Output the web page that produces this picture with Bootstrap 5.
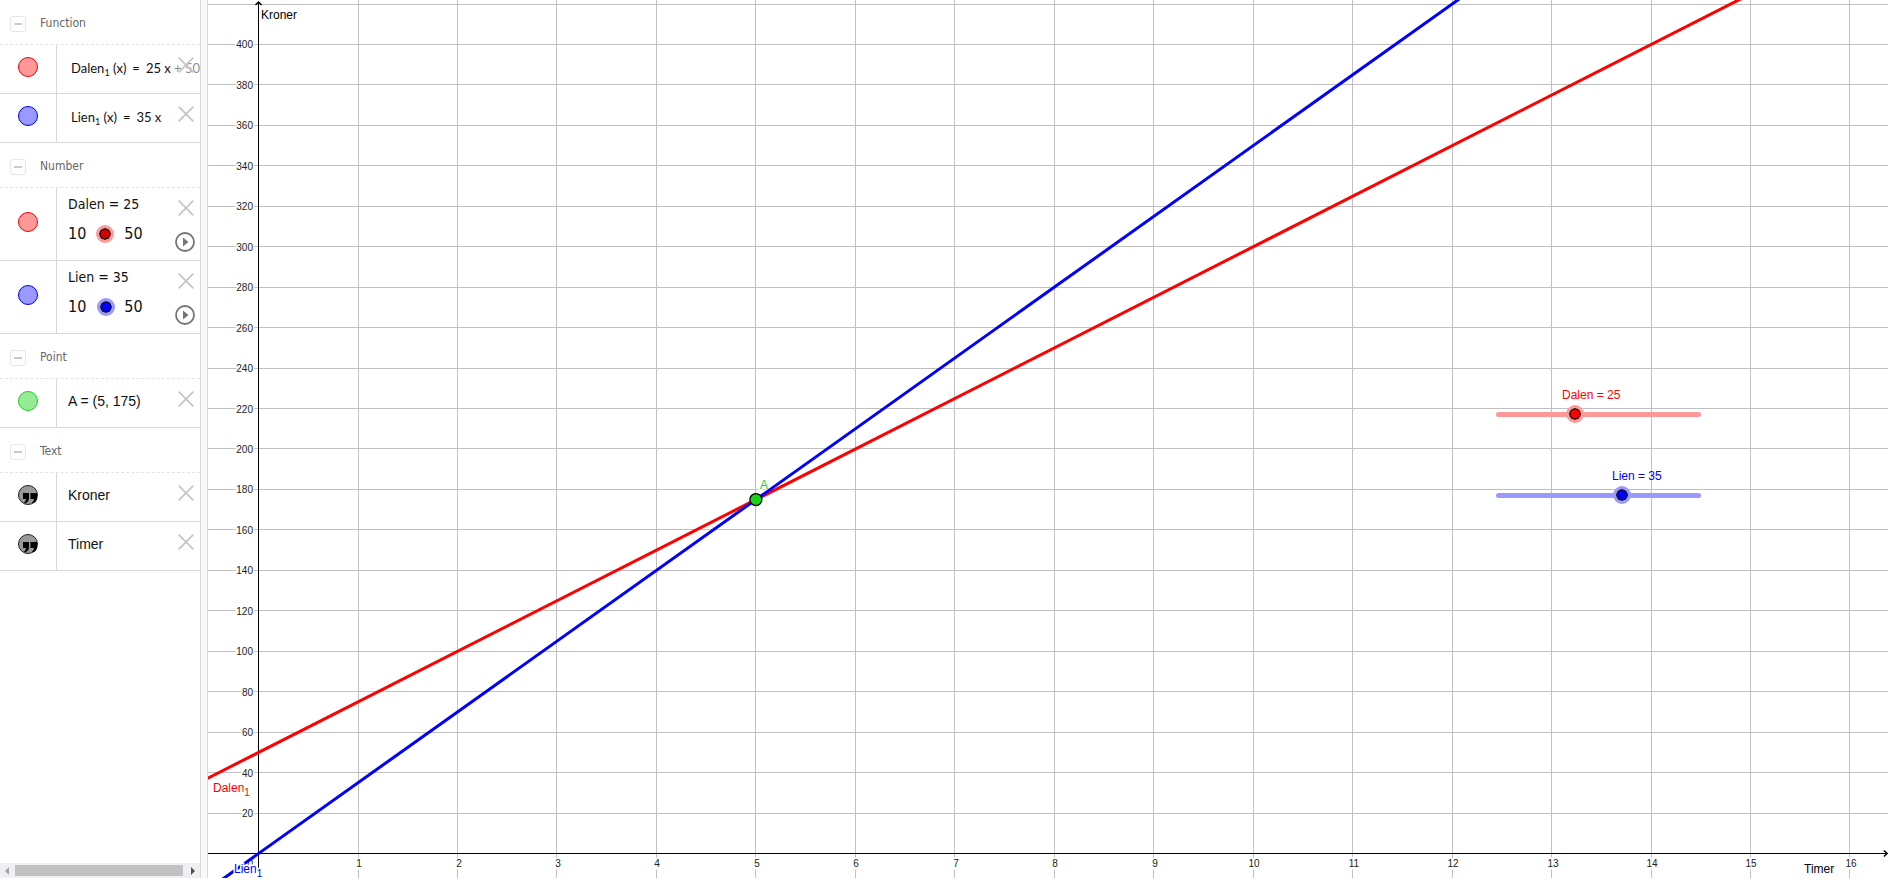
<!DOCTYPE html>
<html lang="en">
<head>
<meta charset="utf-8">
<meta name="viewport" content="width=device-width, initial-scale=1">
<title>Graphing view</title>
<link href="https://cdn.jsdelivr.net/npm/bootstrap@5.3.0/dist/css/bootstrap.min.css" rel="stylesheet">
<style>
body { font-family: "Liberation Sans", Arial, sans-serif; font-size: 14px; color: #1a1a1a; background: #fff; }
.app-shell { padding: 0 2px 2px 0; }
.algebra { width: 201px; border-right: 1px solid #d8d8d8; }
.divider { width: 7px; background: #f8f8f8; border-right: 1px solid #d8d8d8; }
.group-head { height: 45px; border-bottom: 1px dashed #e4e4e8; padding: 4px 0 0 10px; gap: 14px; margin: 0; font: 12px/20px "DejaVu Sans Condensed", "DejaVu Sans", sans-serif; color: #666; }
.group-head span { margin-top: -2px; }
.fold { width: 16px; height: 16px; border: 1px solid #e6e6ee; border-radius: 3px; background: #fff; padding: 0; }
.fold::before { content: ""; display: block; width: 8px; height: 2px; margin: 0 auto; background: #ccc; }
.item { height: 49px; border-bottom: 1px solid #d8d8d8; }
.item.tall { height: 73px; }
.marble-cell { width: 57px; border-right: 1px solid #d8d8d8; padding: 0 1px 4px 0; }
.tool { border: 0; background: none; padding: 0; display: block; line-height: 0; }
.definition { padding: 0 0 3px 11px; color: #111; white-space: nowrap; }
.formula { font: 13px/20px Lato, sans-serif; padding-left: 14px; }
.formula sub { font-size: 9px; bottom: -3px; }
.formula i { font-style: normal; margin: 0 6px; }
.number-text { font: 14px/20px "DejaVu Sans Condensed", "DejaVu Sans", sans-serif; padding-top: 6px; }
.tools { top: 12px; right: 6px; width: 16px; }
.tools .play { margin: 16px 0 0 -3px; }
.veil { background: rgba(255,255,255,.5); top: 0; right: 0; bottom: 1px; width: 28px; }
.hscroll { height: 15px; background: #f0f0f4; }
.hscroll .bar { background: #c1c1c1; height: 11px; }
input[type=range] { appearance: none; -webkit-appearance: none; background: none; margin: 0; padding: 0; display: block; height: 18px; }
input[type=range]::-webkit-slider-runnable-track { height: 5px; border-radius: 3px; background: var(--soft); }
input[type=range]::-webkit-slider-thumb { -webkit-appearance: none; width: 18px; height: 18px; margin-top: -7px; border-radius: 50%; border: 3px solid var(--soft); background: radial-gradient(circle, var(--full) 0 4px, #111 5px 6px, transparent 7px); background-clip: padding-box; background-origin: padding-box; }
.red { --soft: #ff9999; --full: #ff0000; }
.blue { --soft: #9999ff; --full: #0000ff; }
.mini { font-size: 16px; gap: 9px; margin-top: 10px; }
.mini.red { --full: #d60000; }
.mini input { width: 20px; }
.mini input::-webkit-slider-runnable-track { background: none; }
.graph svg.plane { width: 100%; height: 100%; }
.plane text { font-family: "Liberation Sans", Arial, sans-serif; font-size: 12px; paint-order: stroke; stroke: #fff; stroke-width: 3px; }
.plane .tick { font-size: 10px; fill: #222; }
.plane tspan { font-size: 10px; }
.canvas-slider { width: 205px; }
.canvas-slider input { width: 100%; }
.canvas-slider label { font-size: 12px; line-height: 16px; margin-bottom: 2px; }
</style>
<script src="https://cdn.jsdelivr.net/npm/bootstrap@5.3.0/dist/js/bootstrap.bundle.min.js"></script>
</head>
<body>
<svg width="0" height="0" class="position-absolute" aria-hidden="true">
  <symbol id="close" viewBox="0 0 16 16"><path d="M.7.7l14.6 14.6M15.3.7L.7 15.3" stroke="#c6c6c6" stroke-width="1.8" fill="none"/></symbol>
  <symbol id="play" viewBox="0 0 20 20"><circle cx="10" cy="10" r="9" fill="none" stroke="#757575" stroke-width="1.8"/><path d="M8 5.5v9l5.5-4.500z" fill="#757575"/></symbol>
  <symbol id="quote" viewBox="0 0 20 20"><circle cx="10" cy="10" r="9.500" fill="#999" stroke="#222"/><path d="M5 8h6v5q0 4-4 5.500l-1-1q2-1 2-3.500H5zM12.500 8H19v5q0 4-4 5.500l-1-1q2-1 2-3.500h-3.500z" fill="#000"/></symbol>
</svg>
<div class="app-shell d-flex vh-100 overflow-hidden">
  <aside class="algebra d-flex flex-column flex-shrink-0 overflow-hidden">
    <div class="flex-grow-1 overflow-hidden">
      <h2 class="group-head d-flex align-items-center"><button class="fold" aria-label="Collapse Function"></button><span>Function</span></h2>
      <div class="item d-flex position-relative">
        <div class="marble-cell d-flex align-items-center justify-content-center flex-shrink-0"><button class="tool" aria-label="Show Dalen line"><svg width="20" height="20"><circle cx="10" cy="10" r="9.500" fill="#ff9999" stroke="#f00000"/></svg></button></div>
        <div class="definition formula d-flex align-items-center"><span>Dalen<sub>1</sub> (x)<i>=</i>25 x + 50</span></div>
        <div class="veil position-absolute"></div>
        <div class="tools position-absolute"><button class="tool" aria-label="Delete"><svg width="16" height="16"><use href="#close"/></svg></button></div>
      </div>
      <div class="item d-flex position-relative">
        <div class="marble-cell d-flex align-items-center justify-content-center flex-shrink-0"><button class="tool" aria-label="Show Lien line"><svg width="20" height="20"><circle cx="10" cy="10" r="9.500" fill="#9999ff" stroke="#0000f0"/></svg></button></div>
        <div class="definition formula d-flex align-items-center"><span>Lien<sub>1</sub> (x)<i>=</i>35 x</span></div>
        <div class="tools position-absolute"><button class="tool" aria-label="Delete"><svg width="16" height="16"><use href="#close"/></svg></button></div>
      </div>
      <h2 class="group-head d-flex align-items-center"><button class="fold" aria-label="Collapse Number"></button><span>Number</span></h2>
      <div class="item tall d-flex position-relative">
        <div class="marble-cell d-flex align-items-center justify-content-center flex-shrink-0"><button class="tool" aria-label="Show Dalen"><svg width="20" height="20"><circle cx="10" cy="10" r="9.500" fill="#ff9999" stroke="#f00000"/></svg></button></div>
        <div class="definition number-text"><label for="dalen" class="d-block">Dalen = 25</label>
          <div class="mini red d-flex align-items-center"><span>10</span><input id="dalen" type="range" min="10" max="50" value="25"><span>50</span></div></div>
        <div class="tools position-absolute"><button class="tool" aria-label="Delete"><svg width="16" height="16"><use href="#close"/></svg></button><button class="tool play" aria-label="Play"><svg width="20" height="20"><use href="#play"/></svg></button></div>
      </div>
      <div class="item tall d-flex position-relative">
        <div class="marble-cell d-flex align-items-center justify-content-center flex-shrink-0"><button class="tool" aria-label="Show Lien"><svg width="20" height="20"><circle cx="10" cy="10" r="9.500" fill="#9999ff" stroke="#0000f0"/></svg></button></div>
        <div class="definition number-text"><label for="lien" class="d-block">Lien = 35</label>
          <div class="mini blue d-flex align-items-center"><span>10</span><input id="lien" type="range" min="10" max="50" value="35"><span>50</span></div></div>
        <div class="tools position-absolute"><button class="tool" aria-label="Delete"><svg width="16" height="16"><use href="#close"/></svg></button><button class="tool play" aria-label="Play"><svg width="20" height="20"><use href="#play"/></svg></button></div>
      </div>
      <h2 class="group-head d-flex align-items-center"><button class="fold" aria-label="Collapse Point"></button><span>Point</span></h2>
      <div class="item d-flex position-relative">
        <div class="marble-cell d-flex align-items-center justify-content-center flex-shrink-0"><button class="tool" aria-label="Show A"><svg width="20" height="20"><circle cx="10" cy="10" r="9.500" fill="#96eb96" stroke="#1bd01b"/></svg></button></div>
        <div class="definition d-flex align-items-center">A = (5, 175)</div>
        <div class="tools position-absolute"><button class="tool" aria-label="Delete"><svg width="16" height="16"><use href="#close"/></svg></button></div>
      </div>
      <h2 class="group-head d-flex align-items-center"><button class="fold" aria-label="Collapse Text"></button><span>Text</span></h2>
      <div class="item d-flex position-relative">
        <div class="marble-cell d-flex align-items-center justify-content-center flex-shrink-0"><button class="tool" aria-label="Show Kroner"><svg width="20" height="20"><use href="#quote"/></svg></button></div>
        <div class="definition d-flex align-items-center">Kroner</div>
        <div class="tools position-absolute"><button class="tool" aria-label="Delete"><svg width="16" height="16"><use href="#close"/></svg></button></div>
      </div>
      <div class="item d-flex position-relative">
        <div class="marble-cell d-flex align-items-center justify-content-center flex-shrink-0"><button class="tool" aria-label="Show Timer"><svg width="20" height="20"><use href="#quote"/></svg></button></div>
        <div class="definition d-flex align-items-center">Timer</div>
        <div class="tools position-absolute"><button class="tool" aria-label="Delete"><svg width="16" height="16"><use href="#close"/></svg></button></div>
      </div>
    </div>
    <div class="hscroll d-flex align-items-center flex-shrink-0">
      <button class="tool" aria-label="Scroll left"><svg width="15" height="8"><path d="M9 0v8L5 4z" fill="#a3a3a3"/></svg></button>
      <div class="bar flex-grow-1"></div>
      <button class="tool" aria-label="Scroll right"><svg width="17" height="8"><path d="M8 0v8l4-4z" fill="#505050"/></svg></button>
    </div>
  </aside>
  <div class="divider flex-shrink-0"></div>
  <main class="graph flex-grow-1 position-relative overflow-hidden">
    <svg class="plane d-block" id="plane" role="img" aria-label="Graph of Dalen and Lien"></svg>
    <div class="canvas-slider red position-absolute" style="left:1288px;top:387px">
      <label for="dalen-canvas" class="d-block" style="color:#f00;padding-left:66px">Dalen = 25</label>
      <input id="dalen-canvas" type="range" min="10" max="50" value="25"></div>
    <div class="canvas-slider blue position-absolute" style="left:1288px;top:468px">
      <label for="lien-canvas" class="d-block" style="color:#00f;padding-left:116px">Lien = 35</label>
      <input id="lien-canvas" type="range" min="10" max="50" value="35"></div>
  </main>
</div>
<script>
// Coordinate plane: one hour is STEP_X pixels wide, 20 kroner are STEP_Y pixels high.
const plane = document.getElementById('plane');
const STEP_X = 99.46, STEP_Y = 40.45, ORIGIN_X = 50.6, ORIGIN_BOTTOM = 24.5;
function draw() {
  const w = plane.clientWidth, h = plane.clientHeight, oy = h - ORIGIN_BOTTOM;
  const px = x => ORIGIN_X + x * STEP_X, py = y => oy - y * STEP_Y / 20;
  const snap = v => Math.floor(v) + 0.5, ox = snap(ORIGIN_X);
  let s = '', ticks = '';
  for (let i = 1; px(i) < w; i++) {
    s += `<path d="M${snap(px(i))} 0V${h}" stroke="#c0c0c0"/>`;
    ticks += `<rect x="${snap(px(i)) - 3}" y="${oy + 5}" width="6" height="11" fill="#fff"/><text class="tick" text-anchor="middle" x="${Math.round(px(i)) + 1}" y="${oy + 13.5}">${i}</text>`;
  }
  for (let k = 20; py(k) > 0; k += 20) {
    s += `<path d="M0 ${snap(py(k))}H${w}" stroke="#c0c0c0"/>`;
    if (py(k) > 20) ticks += `<text class="tick" text-anchor="end" x="45" y="${Math.round(py(k)) + 4}">${k}</text>`;
  }
  s += `<path d="M${ox} ${h}V2M0 ${oy}H${w}" stroke="#000"/><path d="M${ox - 3} 5l3-3 3 3M${w - 4} ${oy - 3}l3 3-3 3" fill="none" stroke="#000" stroke-width="1.5"/>`;
  s += ticks + `<text class="tick" text-anchor="end" x="45" y="${oy + 13.5}">0</text>`;
  s += `<text x="${px(5) + 4}" y="${py(175) - 11}" fill="#1bd01b">A</text>`;
  const line = (a, b, c) => `<path d="M${px(-1)} ${py(b - a)}L${px(20)} ${py(a * 20 + b)}" stroke="${c}" stroke-width="3"/>`;
  s += line(25, 50, '#f00') + line(35, 0, '#00f');
  s += `<text x="53" y="19">Kroner</text><text x="${w - 84}" y="${oy + 19}">Timer</text>`;
  s += `<text x="5" y="${oy - 62}" fill="#f00">Dalen<tspan dy="4">1</tspan></text><text x="26" y="${oy + 19}" fill="#00f">Lien<tspan dy="4">1</tspan></text>`;
  s += `<circle cx="${px(5)}" cy="${py(175)}" r="6" fill="#1bd01b" stroke="#000" stroke-width="1.300"/>`;
  plane.innerHTML = s;
}
draw();
addEventListener('resize', draw);
</script>
</body>
</html>
